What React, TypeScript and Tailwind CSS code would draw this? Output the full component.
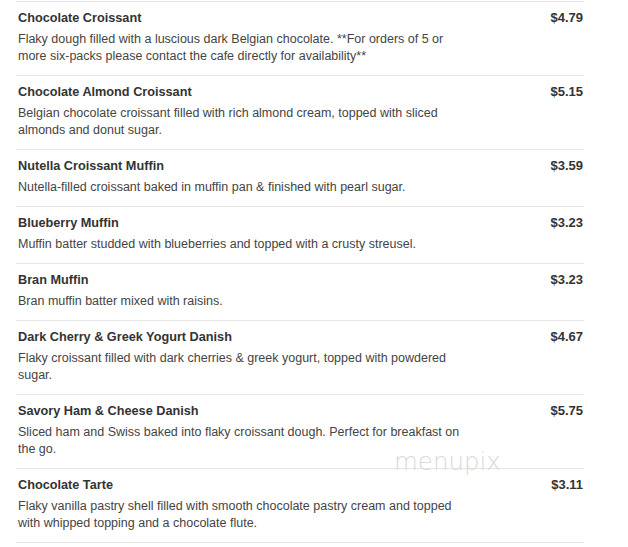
const items = [
  {
    name: "Chocolate Croissant",
    price: "$4.79",
    desc: "Flaky dough filled with a luscious dark Belgian chocolate. **For orders of 5 or more six-packs please contact the cafe directly for availability**",
  },
  {
    name: "Chocolate Almond Croissant",
    price: "$5.15",
    desc: "Belgian chocolate croissant filled with rich almond cream, topped with sliced almonds and donut sugar.",
  },
  {
    name: "Nutella Croissant Muffin",
    price: "$3.59",
    desc: "Nutella-filled croissant baked in muffin pan & finished with pearl sugar.",
  },
  {
    name: "Blueberry Muffin",
    price: "$3.23",
    desc: "Muffin batter studded with blueberries and topped with a crusty streusel.",
  },
  {
    name: "Bran Muffin",
    price: "$3.23",
    desc: "Bran muffin batter mixed with raisins.",
  },
  {
    name: "Dark Cherry & Greek Yogurt Danish",
    price: "$4.67",
    desc: "Flaky croissant filled with dark cherries & greek yogurt, topped with powdered sugar.",
  },
  {
    name: "Savory Ham & Cheese Danish",
    price: "$5.75",
    desc: "Sliced ham and Swiss baked into flaky croissant dough. Perfect for breakfast on the go.",
  },
  {
    name: "Chocolate Tarte",
    price: "$3.11",
    desc: "Flaky vanilla pastry shell filled with smooth chocolate pastry cream and topped with whipped topping and a chocolate flute.",
  },
];

function MenuRow({ name, price, desc }: { name: string; price: string; desc: string }) {
  return (
    <div className="flex justify-between border-t border-[#e6e6e6] pl-[2px] pr-px pt-[7px] pb-[10px]">
      <div className="w-[452px]">
        <div className="text-[12.7px] leading-[18px] font-bold text-[#333]">{name}</div>
        <p className="mt-[4px] text-[12.5px] leading-[17px] text-[#444]">{desc}</p>
      </div>
      <div className="text-[13px] leading-[18px] font-bold text-[#333]">{price}</div>
    </div>
  );
}

export default function App() {
  return (
    <div className="relative min-h-[547px] bg-white pl-[16px] pt-px font-['Liberation_Sans',Arial,sans-serif]">
      <div className="w-[568px] border-b border-[#e6e6e6]">
        {items.map((item) => (
          <MenuRow key={item.name} {...item} />
        ))}
      </div>
      {/* watermark */}
      <div className="absolute left-[394px] top-[450px] font-['DejaVu_Sans',sans-serif] font-extralight text-[24.5px] leading-none text-[#d9d9d9] pointer-events-none select-none">
        menupix
      </div>
    </div>
  );
}
